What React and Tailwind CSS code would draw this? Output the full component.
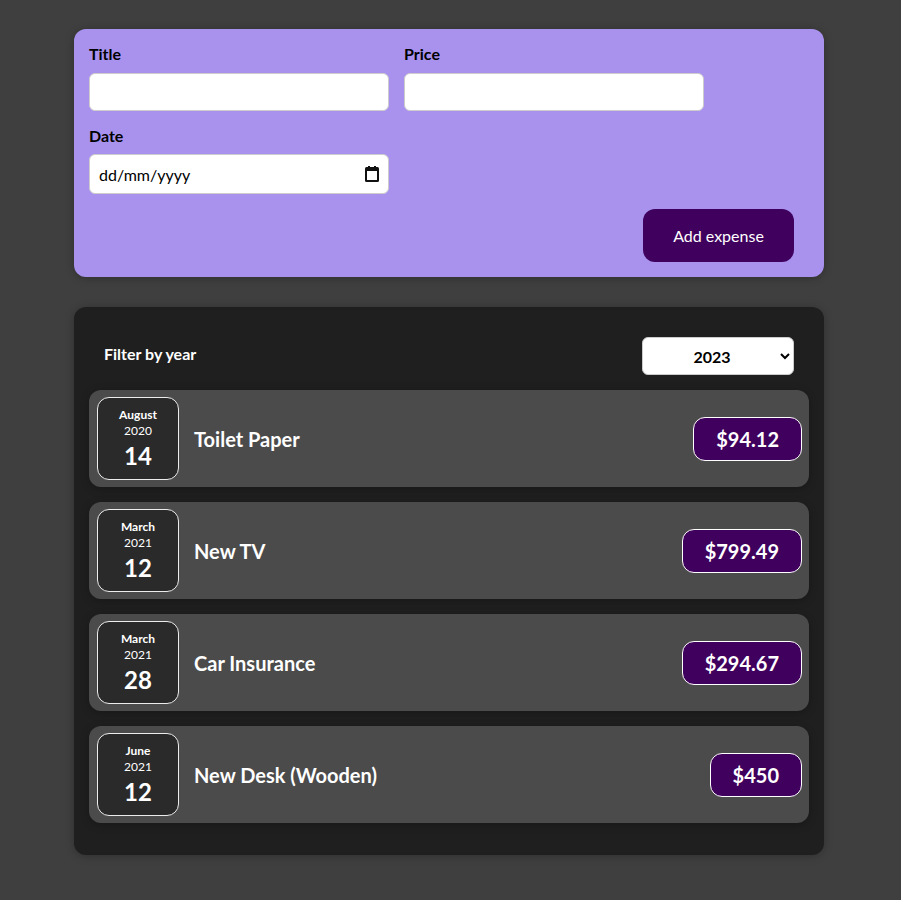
import React from "react";

const items = [
  { m: "August", y: "2020", d: "14", t: "Toilet Paper", p: "$94.12" },
  { m: "March", y: "2021", d: "12", t: "New TV", p: "$799.49" },
  { m: "March", y: "2021", d: "28", t: "Car Insurance", p: "$294.67" },
  { m: "June", y: "2021", d: "12", t: "New Desk (Wooden)", p: "$450" },
];

export default function App() {
  return (
    <div className="min-h-[900px] bg-[#3f3f3f] pt-[29px] pb-[45px]" style={{ fontFamily: "Lato, sans-serif" }}>
      <div className="ml-[74px] w-[750px] rounded-xl bg-[#a892ee] p-[15px] shadow-[0_1px_8px_rgba(0,0,0,0.25)]">
        <div className="flex flex-wrap gap-x-[15px] gap-y-[15px]">
          <div className="w-[300px]">
            <label className="mb-[9px] block text-base font-bold leading-[20px] text-black">Title</label>
            <input className="h-[38px] w-full rounded-md border border-[#ccc] bg-white px-2" />
          </div>
          <div className="w-[300px]">
            <label className="mb-[9px] block text-base font-bold leading-[20px] text-black">Price</label>
            <input className="h-[38px] w-full rounded-md border border-[#ccc] bg-white px-2" />
          </div>
          <div className="w-[300px]">
            <label className="mb-[8px] block text-base font-bold leading-[20px] text-black">Date</label>
            <div className="relative">
              <input
                type="text"
                placeholder="dd/mm/yyyy"
                className="h-[40px] w-full rounded-md border border-[#ccc] bg-white pl-[9px] pr-8 text-base text-black placeholder:text-black"
              />
              <svg className="pointer-events-none absolute right-[10px] top-[12px]" width="14" height="16" viewBox="0 0 14 16">
                <rect x="0" y="1" width="14" height="15" rx="1.5" fill="#111" />
                <rect x="2" y="5" width="10" height="9" fill="#fff" />
                <rect x="3" y="0" width="2" height="3" fill="#111" />
                <rect x="9" y="0" width="2" height="3" fill="#111" />
              </svg>
            </div>
          </div>
        </div>
        <div className="mt-[15px] flex justify-end pr-[15px]">
          <button className="h-[53px] w-[151px] rounded-xl bg-[#40005d] text-base text-white">Add expense</button>
        </div>
      </div>

      <div className="ml-[74px] mt-[30px] w-[750px] rounded-xl bg-[#1f1f1f] px-[15px] pt-[30px] pb-[32px] shadow-[0_1px_8px_rgba(0,0,0,0.25)]">
        <div className="flex items-center justify-between px-[15px]">
          <span className="-mt-[5px] text-base font-bold text-white">Filter by year</span>
          <select className="h-[38px] w-[152px] rounded-md border border-[#ccc] bg-white px-3 text-center font-bold text-black">
            <option>2023</option>
          </select>
        </div>
        <ul className="mt-[15px] flex flex-col gap-[15px]">
          {items.map((it, i) => (
            <li key={i} className="flex h-[97px] items-center rounded-xl bg-[#4b4b4b] p-2 shadow-[0_2px_8px_rgba(0,0,0,0.25)]">
              <div className="flex h-[83px] w-[82px] flex-col items-center justify-center rounded-xl border border-[#ececec] bg-[#2a2a2a] text-white">
                <div className="text-xs font-bold leading-[16px]">{it.m}</div>
                <div className="text-xs leading-[16px]">{it.y}</div>
                <div className="mt-[2px] text-2xl font-bold leading-[30px]">{it.d}</div>
              </div>
              <div className="ml-[15px] flex flex-1 items-center justify-between">
                <h2 className="text-xl font-bold text-white">{it.t}</h2>
                <div className="mr-[-1px] flex h-[44px] items-center rounded-xl border border-white bg-[#40005d] px-[22px] text-xl font-bold text-white">{it.p}</div>
              </div>
            </li>
          ))}
        </ul>
      </div>
    </div>
  );
}
